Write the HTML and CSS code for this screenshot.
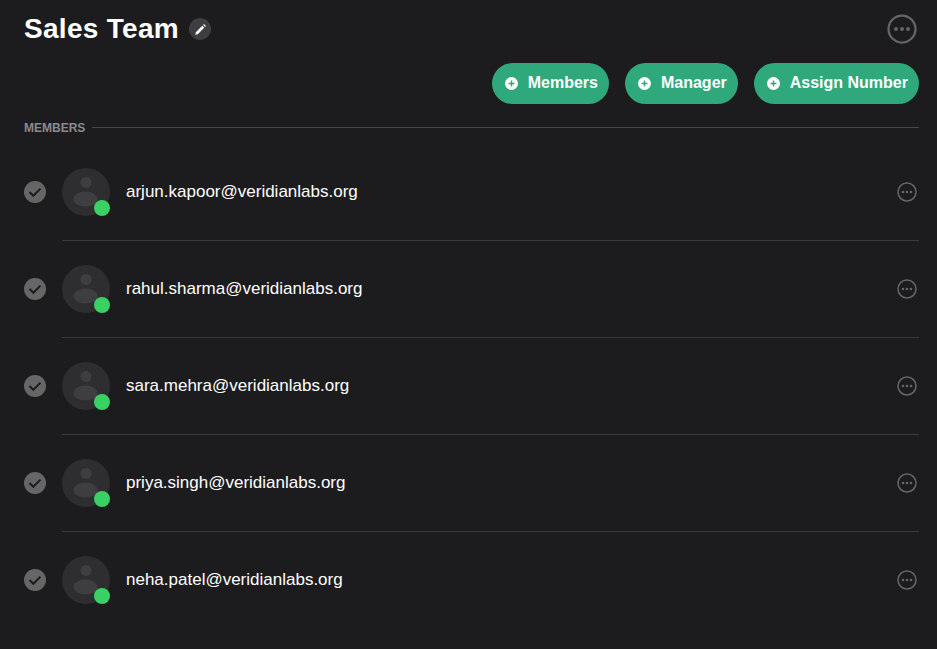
FILE: index.html
```html
<!DOCTYPE html>
<html lang="en">
<head>
  <meta charset="UTF-8">
  <title>Sales Team</title>
  <link rel="stylesheet" href="styles.css">
</head>
<body>

  <svg class="icon-defs" width="0" height="0">
    <symbol id="plus" viewBox="0 0 14 14">
      <circle cx="7" cy="7" r="7" fill="#fff"/>
      <path d="M7 3.8v6.4M3.8 7h6.4" stroke="#2fa87c" stroke-width="1.6"/>
    </symbol>
    <symbol id="more" viewBox="0 0 20 20">
      <circle cx="10" cy="10" r="9" fill="none" stroke="#666" stroke-width="1.5"/>
      <circle cx="6" cy="10" r="1.3" fill="#666"/>
      <circle cx="10" cy="10" r="1.3" fill="#666"/>
      <circle cx="14" cy="10" r="1.3" fill="#666"/>
    </symbol>
    <symbol id="check" viewBox="0 0 22 22">
      <circle cx="11" cy="11" r="11" fill="#666"/>
      <path d="M5.5 11l3.8 3.8L16.5 7.6" fill="none" stroke="#1c1c1e" stroke-width="2"/>
    </symbol>
    <symbol id="person" viewBox="0 0 48 48">
      <circle cx="24" cy="24" r="24" fill="#2e2e30"/>
      <circle cx="24" cy="14.5" r="5.5" fill="#3e3e40"/>
      <ellipse cx="23.5" cy="31" rx="12" ry="7.5" fill="#3e3e40"/>
    </symbol>
  </svg>

  <header class="top-bar">
    <h1>Sales Team</h1>
    <button class="edit-btn">
      <svg width="13" height="13" viewBox="0 0 12 12"><path d="M1.2 10.8l.5-2.3 5.9-5.9 1.8 1.8-5.9 5.9zM8.4 1.8l.8-.8 1.8 1.8-.8.8z" fill="#fff"/></svg>
    </button>
    <svg class="top-more"><use href="#more"/></svg>
  </header>

  <div class="actions">
    <button class="pill"><svg class="plus"><use href="#plus"/></svg><span class="pill-text">Members</span></button>
    <button class="pill"><svg class="plus"><use href="#plus"/></svg><span class="pill-text">Manager</span></button>
    <button class="pill"><svg class="plus"><use href="#plus"/></svg><span class="pill-text">Assign Number</span></button>
  </div>

  <div class="section-label">
    <span>MEMBERS</span>
  </div>

  <ul class="members">
    <li class="member">
      <svg class="check"><use href="#check"/></svg>
      <div class="member-body">
        <div class="avatar"><svg class="avatar-img"><use href="#person"/></svg><span class="status"></span></div>
        <span class="email">arjun.kapoor@veridianlabs.org</span>
        <svg class="row-more"><use href="#more"/></svg>
      </div>
    </li>
    <li class="member">
      <svg class="check"><use href="#check"/></svg>
      <div class="member-body">
        <div class="avatar"><svg class="avatar-img"><use href="#person"/></svg><span class="status"></span></div>
        <span class="email">rahul.sharma@veridianlabs.org</span>
        <svg class="row-more"><use href="#more"/></svg>
      </div>
    </li>
    <li class="member">
      <svg class="check"><use href="#check"/></svg>
      <div class="member-body">
        <div class="avatar"><svg class="avatar-img"><use href="#person"/></svg><span class="status"></span></div>
        <span class="email">sara.mehra@veridianlabs.org</span>
        <svg class="row-more"><use href="#more"/></svg>
      </div>
    </li>
    <li class="member">
      <svg class="check"><use href="#check"/></svg>
      <div class="member-body">
        <div class="avatar"><svg class="avatar-img"><use href="#person"/></svg><span class="status"></span></div>
        <span class="email">priya.singh@veridianlabs.org</span>
        <svg class="row-more"><use href="#more"/></svg>
      </div>
    </li>
    <li class="member">
      <svg class="check"><use href="#check"/></svg>
      <div class="member-body last">
        <div class="avatar"><svg class="avatar-img"><use href="#person"/></svg><span class="status"></span></div>
        <span class="email">neha.patel@veridianlabs.org</span>
        <svg class="row-more"><use href="#more"/></svg>
      </div>
    </li>
  </ul>

</body>
</html>
```

FILE: styles.css
```css
html, body {
  height: 100%;
}
body {
  margin: 0;
  padding: 0 18px 0 24px;
  box-sizing: border-box;
  overflow: hidden;
  font-family: 'Liberation Sans', Arial, sans-serif;
  background-color: #1c1c1e;
  color: #fff;
}
.icon-defs {
  position: absolute;
}
.top-bar {
  display: flex;
  align-items: center;
  height: 58px;
}
h1 {
  margin: 0;
  font-size: 28px;
  font-weight: 700;
  line-height: 58px;
  letter-spacing: 0.3px;
}
.edit-btn {
  display: flex;
  align-items: center;
  justify-content: center;
  width: 22px;
  height: 22px;
  margin-left: 10px;
  padding: 0;
  border: none;
  border-radius: 50%;
  background-color: #3e3e40;
}
.top-more {
  width: 30px;
  height: 30px;
  margin-left: auto;
  margin-right: 2px;
}
.actions {
  display: flex;
  justify-content: flex-end;
  gap: 16px;
  margin-top: 5px;
}
.pill {
  display: flex;
  align-items: center;
  height: 41px;
  padding: 0 11px 0 13px;
  border: none;
  border-radius: 21px;
  background-color: #2fa87c;
  color: #fff;
  font-family: inherit;
  font-size: 16px;
  font-weight: 700;
}
.pill-text {
  margin-bottom: 2px;
}
.plus {
  width: 13px;
  height: 13px;
  margin-right: 10px;
  margin-bottom: 1px;
}
.section-label {
  display: flex;
  align-items: center;
  gap: 7px;
  margin-top: 16px;
  height: 15px;
  color: #8a8a8e;
  font-size: 12px;
  font-weight: 700;
}
.section-label::after {
  content: "";
  flex: 1;
  height: 1px;
  background-color: #48484a;
}
.members {
  list-style: none;
  margin: 9px 0 0;
  padding: 0;
}
.member {
  display: flex;
  align-items: center;
}
.check {
  width: 22px;
  height: 22px;
  margin-right: 16px;
  margin-bottom: 1px;
  flex-shrink: 0;
}
.member-body {
  flex: 1;
  display: flex;
  align-items: center;
  padding: 24px 0;
  border-bottom: 1px solid #3a3a3c;
}
.member-body.last {
  border-bottom-color: transparent;
}
.avatar {
  position: relative;
  width: 48px;
  height: 48px;
  margin-right: 16px;
}
.avatar-img {
  display: block;
  width: 48px;
  height: 48px;
}
.status {
  position: absolute;
  right: 0;
  bottom: 0;
  width: 16px;
  height: 16px;
  border-radius: 50%;
  background-color: #39d164;
}
.email {
  font-size: 17px;
}
.row-more {
  width: 20px;
  height: 20px;
  margin-left: auto;
  margin-right: 2px;
}
```
